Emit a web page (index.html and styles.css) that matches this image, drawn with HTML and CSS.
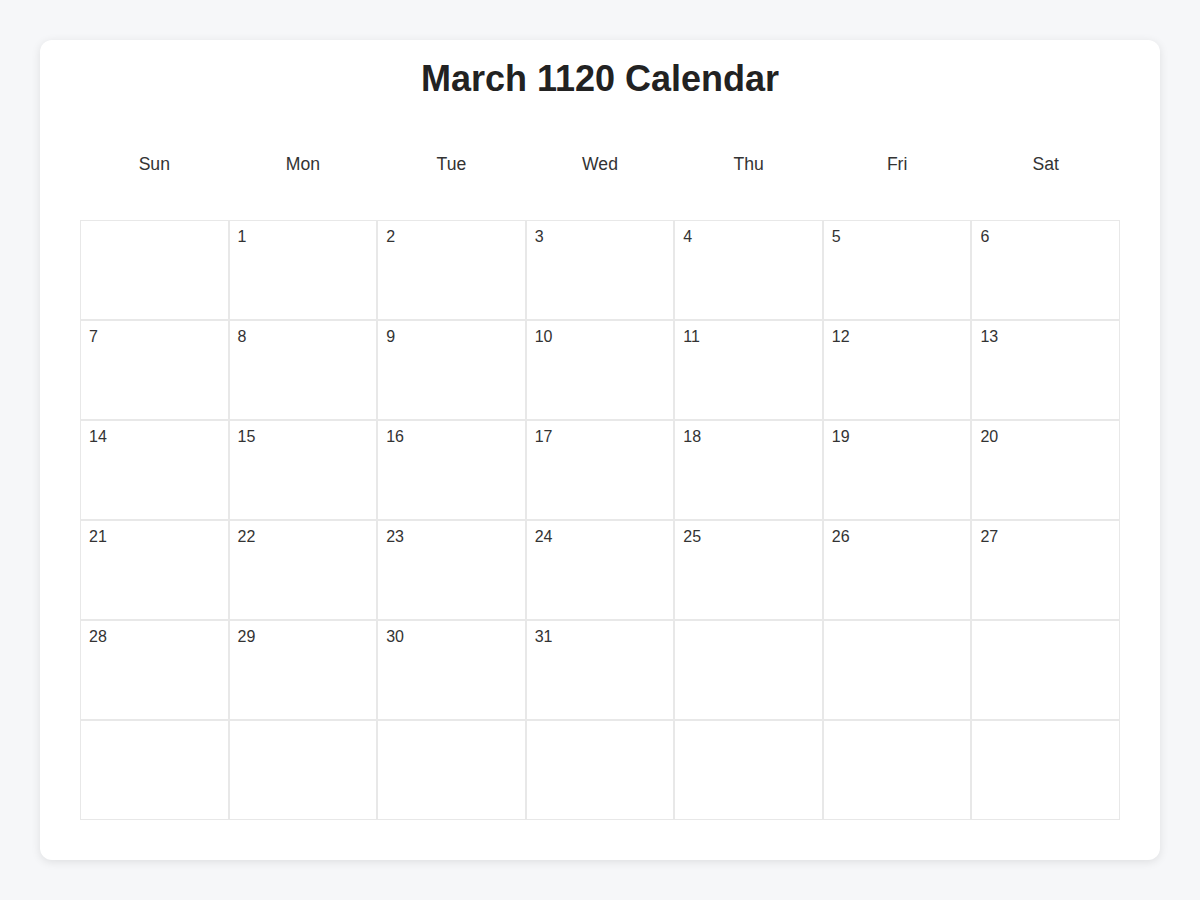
FILE: index.html
```html
<!DOCTYPE html>
<html lang="en">
<head>
<meta charset="utf-8">
<title>March 1120 Calendar</title>
<link rel="stylesheet" href="styles.css">
</head>
<body>
<div class="card">
  <h1 class="title">March 1120 Calendar</h1>
  <div class="weekdays">
    <div class="weekday">Sun</div>
    <div class="weekday">Mon</div>
    <div class="weekday">Tue</div>
    <div class="weekday">Wed</div>
    <div class="weekday">Thu</div>
    <div class="weekday">Fri</div>
    <div class="weekday">Sat</div>
  </div>
  <div class="grid">
    <div class="day"></div>
    <div class="day">1</div>
    <div class="day">2</div>
    <div class="day">3</div>
    <div class="day">4</div>
    <div class="day">5</div>
    <div class="day">6</div>
    <div class="day">7</div>
    <div class="day">8</div>
    <div class="day">9</div>
    <div class="day">10</div>
    <div class="day">11</div>
    <div class="day">12</div>
    <div class="day">13</div>
    <div class="day">14</div>
    <div class="day">15</div>
    <div class="day">16</div>
    <div class="day">17</div>
    <div class="day">18</div>
    <div class="day">19</div>
    <div class="day">20</div>
    <div class="day">21</div>
    <div class="day">22</div>
    <div class="day">23</div>
    <div class="day">24</div>
    <div class="day">25</div>
    <div class="day">26</div>
    <div class="day">27</div>
    <div class="day">28</div>
    <div class="day">29</div>
    <div class="day">30</div>
    <div class="day">31</div>
    <div class="day"></div>
    <div class="day"></div>
    <div class="day"></div>
    <div class="day"></div>
    <div class="day"></div>
    <div class="day"></div>
    <div class="day"></div>
    <div class="day"></div>
    <div class="day"></div>
    <div class="day"></div>
  </div>
</div>
</body>
</html>
```
FILE: styles.css
```css
* {
  box-sizing: border-box;
}

html, body {
  margin: 0;
  padding: 0;
}

body {
  background: #f6f7f9;
  font-family: "Liberation Sans", Arial, sans-serif;
  color: #333;
  padding: 40px;
}

.card {
  background: #fff;
  border-radius: 12px;
  box-shadow: 0 2px 10px rgba(0, 0, 0, 0.1);
  padding: 18px 40px 40px;
}

.title {
  margin: 0;
  font-size: 36px;
  line-height: 41px;
  font-weight: bold;
  text-align: center;
  color: #222;
}

.weekdays {
  display: grid;
  grid-template-columns: repeat(7, 1fr);
  margin: 45px 0 36px;
}

.weekday {
  text-align: center;
  font-size: 17.6px;
  line-height: 20px;
  padding: 10px 0;
  color: #333;
}

.grid {
  display: grid;
  grid-template-columns: repeat(7, 1fr);
  grid-auto-rows: 100px;
}

.day {
  background: #fff;
  border: 1px solid #e8e8e8;
  padding: 7px 8px;
  font-size: 16px;
  color: #333;
}
```
